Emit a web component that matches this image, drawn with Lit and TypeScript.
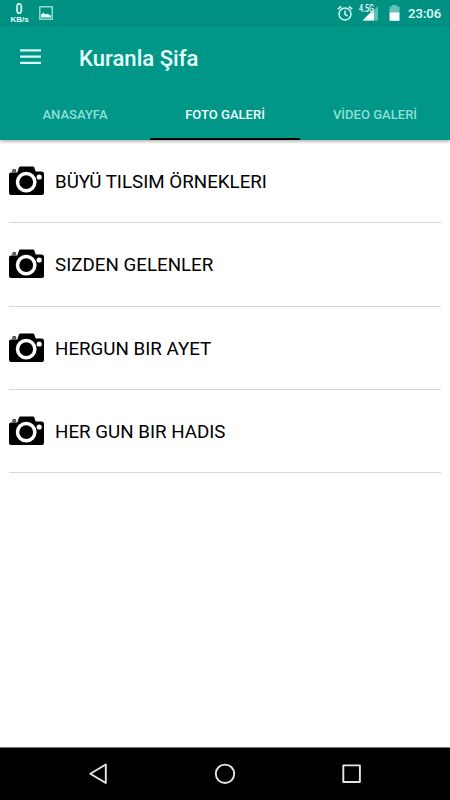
import { LitElement, html, css } from "lit";
import { customElement, property, state } from "lit/decorators.js";
import { classMap } from "lit/directives/class-map.js";

@customElement("status-bar")
class StatusBar extends LitElement {
  static styles = css`
    :host { display: flex; justify-content: space-between; height: 27px; color: #e4fffb; padding: 0 9px 0 10px; box-sizing: border-box; }
    .side { display: flex; align-items: flex-start; }
    .speed { display: flex; flex-direction: column; align-items: center; width: 19px; padding-top: 1px; font-weight: 500; }
    .value { font-size: 14.5px; line-height: 17px; transform: scaleX(0.85); }
    .unit { font: 700 8px/8px "Liberation Sans", sans-serif; margin-top: -2px; white-space: nowrap; }
    .photo { margin: 6px 0 0 10px; }
    .alarm { margin: 5px 0 0; }
    .signal { margin: 1px 0 0 6px; }
    .battery { margin: 5px 0 0 10px; }
    .clock { font-size: 13.1px; line-height: 27px; font-weight: 500; margin-left: 8px; width: 33px; white-space: nowrap; }
    .net { font: 500 10.5px Roboto, sans-serif; }
    svg { display: block; }
  `;
  render() {
    return html`
      <div class="side">
        <div class="speed"><span class="value">0</span><span class="unit">KB/s</span></div>
        <svg class="photo" width="14" height="14" viewBox="0 0 14 14">
          <rect x=".8" y=".8" width="12.4" height="12.4" fill="none" stroke="#a5e6dd" stroke-width="1.3"/>
          <path d="M2 11.500V8.800L4.500 6.600l2 1.800L8.200 7.800 12 9.600v1.900z" fill="#e4fffb"/>
        </svg>
      </div>
      <div class="side">
        <svg class="alarm" width="16" height="17" viewBox="0 0 16 17" fill="none" stroke="#d5f8f3" stroke-width="1.5">
          <circle cx="8" cy="9" r="6"/><path d="M8 5.500V9.400l2.600 1.600M.8 4.100 4.200 1.300M15.200 4.100 11.800 1.300"/>
        </svg>
        <svg class="signal" width="20" height="20" viewBox="0 -2 20 20">
          <path d="M19 3v14.500H5z" fill="#5bc0b3"/><path d="M15 6v11.500H3.500z" fill="#f4fffd"/>
          <text class="net" x="0" y="9" textLength="15" lengthAdjust="spacingAndGlyphs" fill="#eafffc" stroke="#009082" stroke-width=".8" paint-order="stroke">4.5G</text>
        </svg>
        <svg class="battery" width="11" height="16" viewBox="0 0 11 16">
          <path d="M3 0h5v1.500h2.500V8H.500V1.500H3z" fill="#66c2b7"/><path d="M.5 7.500h10v8.300H.5z" fill="#fafffe"/>
        </svg>
        <span class="clock">23:06</span>
      </div>`;
  }
}

@customElement("tab-strip")
class TabStrip extends LitElement {
  @property({ type: Array }) tabs: string[] = [];
  @property({ type: Number }) selected = 0;
  static styles = css`
    :host { display: grid; grid-template-columns: repeat(3, 1fr); height: 51px; }
    .tab { border: 0; border-bottom: 2px solid transparent; padding: 2px 0 0; background: none; font: 500 13.05px/47px Roboto, sans-serif; color: #8fdfd4; white-space: nowrap; }
    .active { color: #f0fffd; border-bottom-color: #000; }
  `;
  render() {
    return this.tabs.map((t, i) => html`<button class=${classMap({ tab: true, active: i === this.selected })}
      @click=${() => this.dispatchEvent(new CustomEvent("pick", { detail: i }))}>${t}</button>`);
  }
}

@customElement("gallery-row")
class GalleryRow extends LitElement {
  @property() label = "";
  static styles = css`
    :host { display: flex; align-items: center; height: 83.333px; box-sizing: border-box; border-bottom: 1px solid #d8d8d8; font-size: 18.75px; color: #000; }
    svg { display: block; flex: none; margin-right: 11px; }
    span { white-space: nowrap; padding-top: 2px; }
  `;
  render() {
    return html`
      <svg width="35" height="30" viewBox="0 0 35 30">
        <path d="M2 6.500H8.300L10 1.500Q10.300.500 11.300.500H24Q25 .500 25.300 1.500L26.700 5.500H32.500Q35 5.500 35 8V27Q35 29 33 29H2Q0 29 0 27V8.500Q0 6.500 2 6.500Z"/>
        <rect x="3.700" y="3.600" width="3" height="2.400" rx=".6" fill="#888" stroke="#222" stroke-width=".9"/>
        <circle cx="17.200" cy="16.100" r="8.700" fill="#000" stroke="#fff" stroke-width="3.500"/>
        <circle cx="30.200" cy="11" r="2.600" fill="#fff"/>
      </svg>
      <span>${this.label}</span>`;
  }
}

@customElement("nav-bar")
class NavBar extends LitElement {
  static styles = css`
    :host { display: flex; justify-content: center; align-items: center; gap: 103px; height: 53px; box-sizing: border-box; background: #000; border-top: 1px solid #777; }
    svg { display: block; fill: none; stroke: #e6e6e6; stroke-width: 1.9; stroke-linejoin: round; }
  `;
  render() {
    return html`
      <svg width="24" height="24" viewBox="0 0 24 24"><path d="M19.800 2.500v18.500L4.300 11.700z"/></svg>
      <svg width="24" height="24" viewBox="0 0 24 24"><circle cx="12" cy="11.800" r="9.200"/></svg>
      <svg width="24" height="24" viewBox="0 0 24 24"><rect x="3.300" y="3.400" width="16.600" height="16.600"/></svg>`;
  }
}

@customElement("app-root")
class AppRoot extends LitElement {
  @state() private selected = 1;
  static styles = css`
    :host { display: flex; flex-direction: column; height: 800px; background: #fff; font-family: Roboto, sans-serif; overflow: hidden; }
    .header { height: 140px; flex: none; background: #009688; box-shadow: 0 1px 4px rgba(0, 0, 0, 0.4); display: flex; flex-direction: column; }
    .status { background: linear-gradient(#009182 22px, #008b7d 26px, #009688 27px); }
    .toolbar { height: 62px; display: flex; align-items: center; padding-left: 20px; }
    .menu { display: block; margin: -2px 38px 0 0; }
    .title { margin: -1px 0 0; font-size: 22.1px; font-weight: 500; color: #e8fffc; white-space: nowrap; }
    .list { flex: 1; padding: 0 9px; }
  `;
  render() {
    const rows = ["BÜYÜ TILSIM ÖRNEKLERI", "SIZDEN GELENLER", "HERGUN BIR AYET", "HER GUN BIR HADIS"];
    return html`
      <header class="header">
        <status-bar class="status"></status-bar>
        <div class="toolbar">
          <svg class="menu" width="21" height="18" viewBox="0 0 21 18" fill="none" stroke="#d9fbf6" stroke-width="2.300"><path d="M0 2.300h21M0 8.600h21M0 14.900h21"/></svg>
          <h1 class="title">Kuranla Şifa</h1>
        </div>
        <tab-strip .tabs=${["ANASAYFA", "FOTO GALERİ", "VİDEO GALERİ"]} .selected=${this.selected}
          @pick=${(e: CustomEvent) => (this.selected = e.detail)}></tab-strip>
      </header>
      <main class="list">${rows.map((r) => html`<gallery-row .label=${r}></gallery-row>`)}</main>
      <nav-bar></nav-bar>`;
  }
}
